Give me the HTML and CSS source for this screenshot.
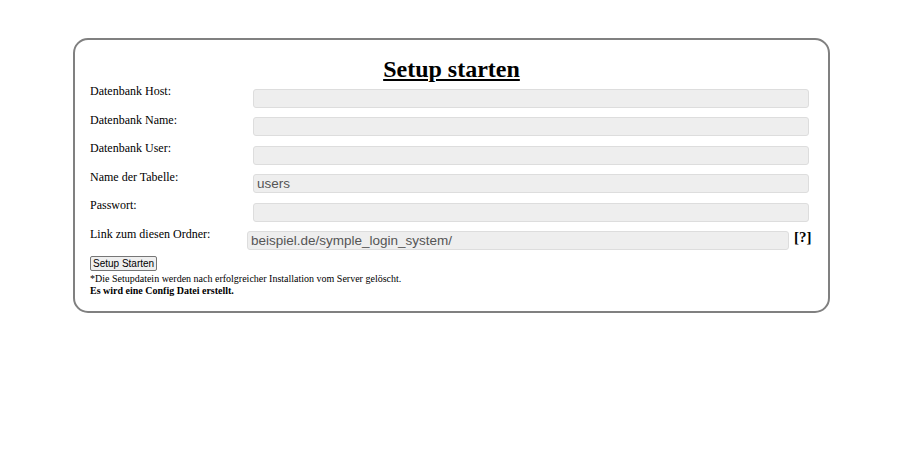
FILE: index.html
```html
<!DOCTYPE html>
<html lang="de">
<head>
<meta charset="utf-8">
<title>Setup starten</title>
<link rel="stylesheet" href="styles.css">
</head>
<body>
<div class="box">
  <h1 class="title">Setup starten</h1>
  <form class="form">
    <div class="row"><label class="label">Datenbank Host:</label><input class="field" type="text" value=""></div>
    <div class="row"><label class="label">Datenbank Name:</label><input class="field" type="text" value=""></div>
    <div class="row"><label class="label">Datenbank User:</label><input class="field" type="text" value=""></div>
    <div class="row"><label class="label">Name der Tabelle:</label><input class="field" type="text" value="users"></div>
    <div class="row"><label class="label">Passwort:</label><input class="field" type="password" value=""></div>
    <div class="row row-link"><label class="label label-link">Link zum diesen Ordner:</label><input class="field field-link" type="text" value="beispiel.de/symple_login_system/"><span class="help">[?]</span></div>
    <button class="submit" type="button">Setup Starten</button>
    <p class="note">*Die Setupdatein werden nach erfolgreicher Installation vom Server gelöscht.</p>
    <p class="note note-bold">Es wird eine Config Datei erstellt.</p>
  </form>
</div>
</body>
</html>
```
FILE: styles.css
```css
html, body {
  margin: 0;
  padding: 0;
  background: #fff;
}
body {
  font-family: "Liberation Serif", "Times New Roman", serif;
  color: #000;
  padding-top: 38px;
}
.box {
  box-sizing: border-box;
  width: 757px;
  margin-left: 73px;
  height: 275px;
  border: 2px solid #808080;
  border-radius: 15px;
  padding: 15px 19px 0 15px;
}
.title {
  margin: 0 0 1px 0;
  font-size: 24px;
  line-height: 28px;
  font-weight: bold;
  text-decoration: underline;
  text-align: center;
  padding-left: 4px;
}
.form {
  margin: 0;
}
.row {
  display: flex;
  align-items: flex-start;
  height: 28.5px;
}
.label {
  display: block;
  width: 163px;
  flex: none;
  font-size: 12px;
  line-height: 14px;
}
.label-link {
  width: 157px;
}
.field {
  box-sizing: border-box;
  flex: 1;
  min-width: 0;
  margin: 4.5px 0 0 0;
  height: 19px;
  padding: 0 3px;
  background: #eee;
  border: 1px solid #ddd;
  border-radius: 3px;
  font-family: "Liberation Sans", Arial, sans-serif;
  font-size: 13.5px;
  color: #555;
  outline: none;
}
.field-link {
  flex: none;
  width: 542px;
}
.help {
  margin: 2px 0 0 5px;
  font-weight: bold;
  font-size: 15px;
  line-height: 16px;
}
.submit {
  display: block;
  margin: 1px 0 0 0;
  height: 15px;
  padding: 0 2px;
  font-family: "Liberation Sans", Arial, sans-serif;
  font-size: 10px;
  line-height: 10px;
  color: #000;
  background: #efefef;
  border: 1px solid #767676;
  border-radius: 2px;
}
.note {
  margin: 0;
  font-size: 10px;
  line-height: 12px;
}
.note:first-of-type {
  margin-top: 2px;
}
.note-bold {
  font-weight: bold;
}
```
